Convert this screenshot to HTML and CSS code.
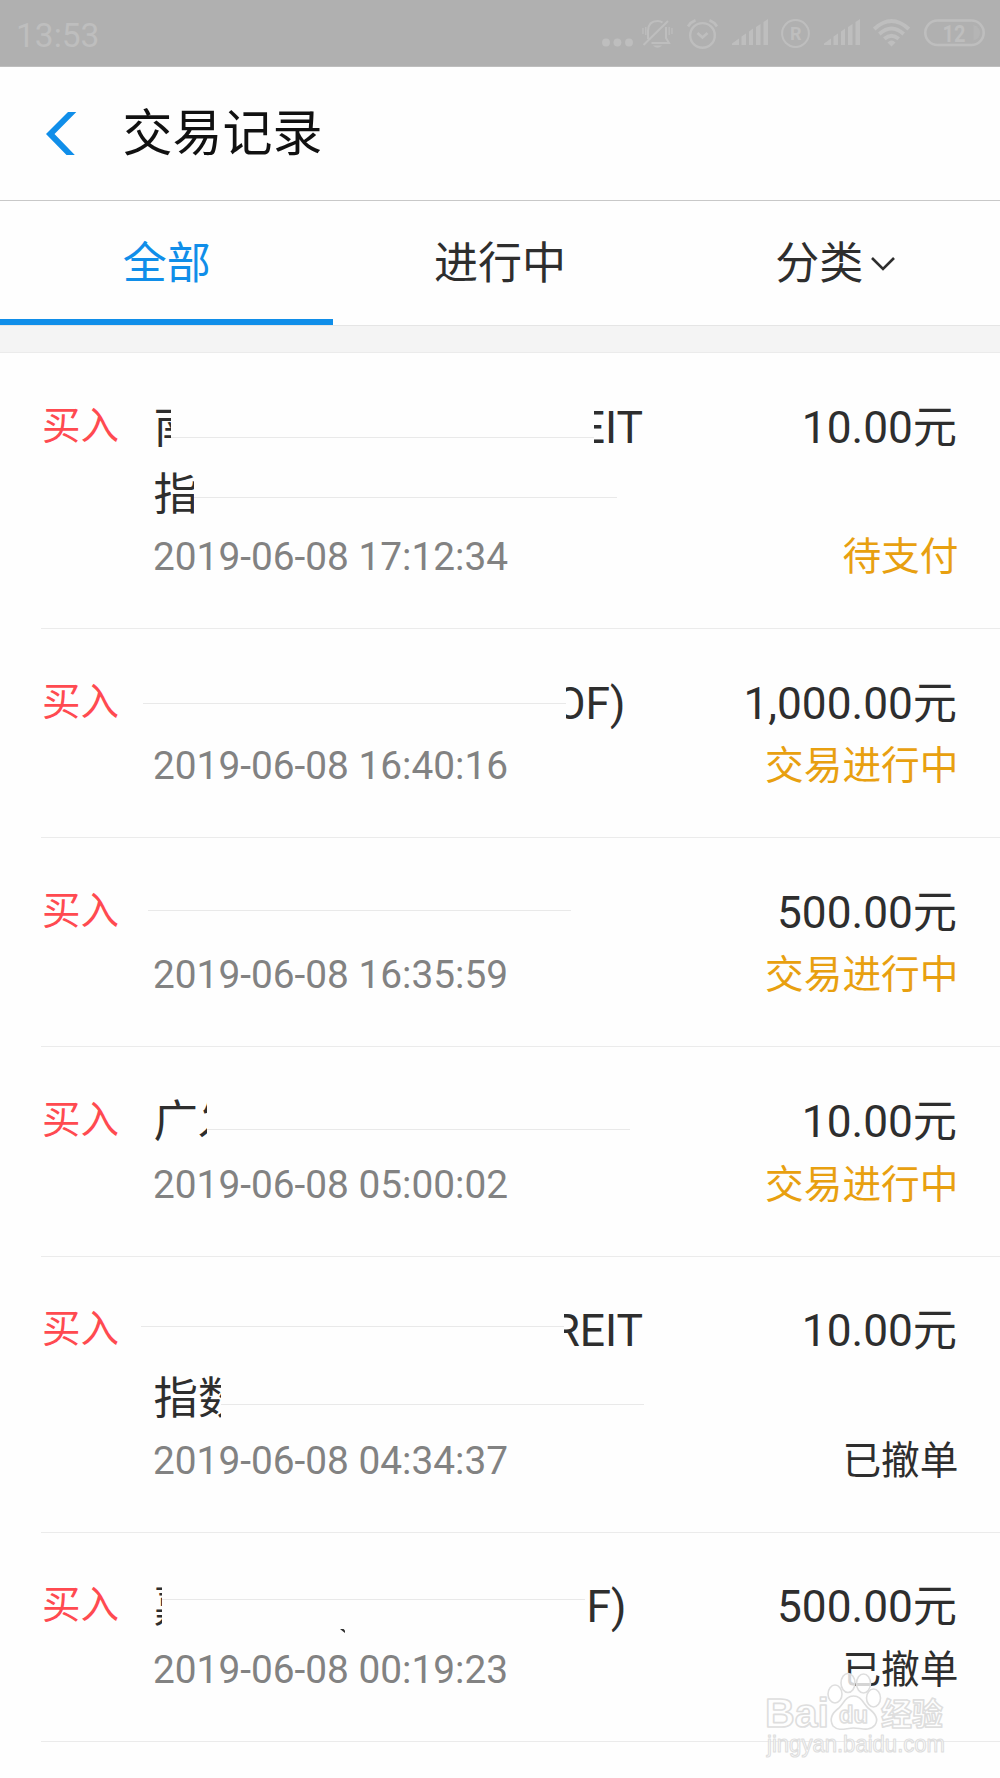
FILE: index.html
```html
<!DOCTYPE html>
<html lang="zh-CN">
<head>
  <meta charset="UTF-8">
  <title>交易记录</title>
  <link rel="stylesheet" href="styles.css">
</head>
<body>

  <!-- Status bar -->
  <div class="status-bar">
    <span class="clock">13:53</span>
    <div class="status-icons">
      <svg class="dots" width="31" height="30" viewBox="0 0 31 30" fill="currentColor">
        <circle cx="4" cy="23.5" r="3.9"/><circle cx="15.4" cy="23.5" r="3.9"/><circle cx="27" cy="23.5" r="3.9"/>
      </svg>
      <svg width="31" height="30" viewBox="0 0 31 30" fill="none" stroke="currentColor" stroke-width="2">
        <path d="M6 20V11.500Q6.500 2 15.500 2Q18.500 2 20.500 3.500M24 8V19L27 24H9.500M1.500 26L26 2"/>
        <path d="M1 9V15M3.800 8V16M27.200 8V16M30 9V15" stroke-width="1.300"/>
        <path d="M11 26.500H20Q15.500 31 11 26.500Z" fill="currentColor" stroke="none"/>
      </svg>
      <svg width="31" height="30" viewBox="0 0 31 30" fill="none" stroke="currentColor" stroke-width="2.400">
        <circle cx="15.500" cy="16.400" r="12.300"/>
        <path d="M10.500 14L15.500 18.500L20.500 14" stroke-width="2.600"/>
        <path d="M1 7.500Q4 3 8.500 1.300M22.500 1.300Q27 3 30 7.500" stroke-width="2.800"/>
      </svg>
      <svg width="36" height="30" viewBox="0 0 36 30" fill="currentColor">
        <path d="M0 26V24.500L7 19.500V26ZM9.500 26V17.500L14 14.500V26ZM17 26V12.500L21 9.500V26ZM24 26V8L28.500 5V26ZM31.500 26V3L36 0V26Z"/>
      </svg>
      <svg width="29" height="30" viewBox="0 0 29 30" fill="none" stroke="currentColor" stroke-width="2">
        <circle cx="14.500" cy="14.500" r="13.400"/>
        <text class="icon-text" x="14.700" y="21" font-size="18" text-anchor="middle">R</text>
      </svg>
      <svg width="36" height="30" viewBox="0 0 36 30" fill="currentColor">
        <path d="M0 26V24.500L7 19.500V26ZM9.500 26V17.500L14 14.500V26ZM17 26V12.500L21 9.500V26ZM24 26V8L28.500 5V26ZM31.500 26V3L36 0V26Z"/>
      </svg>
      <svg width="37" height="30" viewBox="0 0 37 30" fill="none" stroke="currentColor" stroke-width="3.800">
        <path d="M1.200 10Q18.500 -6 35.800 10M6.300 15Q18.500 4 30.700 15M11.300 19.800Q18.500 13.500 25.700 19.800"/>
        <path d="M14.500 23.500Q18.500 19.500 22.500 23.500L18.500 27.500Z" fill="currentColor" stroke="none"/>
      </svg>
      <svg width="61" height="30" viewBox="0 0 61 30" fill="none" stroke="currentColor" stroke-width="2.600">
        <rect x="1.300" y="1.500" width="58.400" height="24.500" rx="12.200"/>
        <path d="M49.500 6Q56 8 56 13.700Q56 19.500 49.500 21.500Z" fill="currentColor" stroke="none" opacity=".4"/>
        <text class="icon-text" x="30" y="22.500" font-size="24" text-anchor="middle" textLength="23" lengthAdjust="spacingAndGlyphs">12</text>
      </svg>
    </div>
  </div>

  <!-- Title -->
  <header class="header">
    <svg class="back" width="31" height="44" viewBox="0 0 31 44" fill="#108ee9">
      <path d="M22 0H30.300L8.500 22L28.800 43H20.500L0 22Z"/>
    </svg>
    <h1>交易记录</h1>
  </header>

  <!-- Tabs -->
  <nav class="tabs">
    <div class="tab active">全部</div>
    <div class="tab">进行中</div>
    <div class="tab sort">分类<svg class="arrow" width="24" height="14" viewBox="0 0 24 14" fill="none" stroke="#2e2e2e" stroke-width="2.600"><path d="M1 1L12 12L23 1"/></svg></div>
  </nav>
  <div class="spacer"></div>

  <!-- Records -->
  <ul class="records">
    <li class="record">
      <span class="type">买入</span>
      <div class="info">
        <div class="name r1a"><span class="head">南</span><i class="rule"></i><span class="tail">EIT</span></div>
        <div class="name r1b"><span class="head">指</span><i class="rule"></i></div>
        <div class="time">2019-06-08 17:12:34</div>
      </div>
      <div class="result">
        <div class="amount">10.00元</div>
        <div class="state pending">待支付</div>
      </div>
    </li>

    <li class="record">
      <span class="type">买入</span>
      <div class="info">
        <div class="name r2"><i class="rule"></i><span class="tail">OF)</span></div>
        <div class="time">2019-06-08 16:40:16</div>
      </div>
      <div class="result">
        <div class="amount">1,000.00元</div>
        <div class="state pending">交易进行中</div>
      </div>
    </li>

    <li class="record">
      <span class="type">买入</span>
      <div class="info">
        <div class="name r3"><i class="rule"></i></div>
        <div class="time">2019-06-08 16:35:59</div>
      </div>
      <div class="result">
        <div class="amount">500.00元</div>
        <div class="state pending">交易进行中</div>
      </div>
    </li>

    <li class="record">
      <span class="type">买入</span>
      <div class="info">
        <div class="name r4"><span class="head">广发</span><i class="rule"></i></div>
        <div class="time">2019-06-08 05:00:02</div>
      </div>
      <div class="result">
        <div class="amount">10.00元</div>
        <div class="state pending">交易进行中</div>
      </div>
    </li>

    <li class="record">
      <span class="type">买入</span>
      <div class="info">
        <div class="name r5a"><i class="rule"></i><span class="tail">REIT</span></div>
        <div class="name r5b"><span class="head">指数</span><i class="rule"></i></div>
        <div class="time">2019-06-08 04:34:37</div>
      </div>
      <div class="result">
        <div class="amount">10.00元</div>
        <div class="state">已撤单</div>
      </div>
    </li>

    <li class="record">
      <span class="type">买入</span>
      <div class="info">
        <div class="name r6"><span class="head">嘉</span><i class="rule"></i><span class="tail">F)</span>
          <svg class="speck" width="6" height="4" viewBox="0 0 6 4" fill="#2e2e2e"><path d="M0 0H3.500L5 1.500V4Z"/></svg>
        </div>
        <div class="time">2019-06-08 00:19:23</div>
      </div>
      <div class="result">
        <div class="amount">500.00元</div>
        <div class="state">已撤单</div>
      </div>
    </li>
  </ul>

  <!-- Watermark -->
  <svg class="watermark" width="190" height="92" viewBox="0 0 190 92">
    <g class="wm-shape">
      <ellipse cx="15" cy="23" rx="7" ry="9"/>
      <ellipse cx="28" cy="12" rx="7" ry="9.500"/>
      <ellipse cx="43.500" cy="12.500" rx="7" ry="9.500"/>
      <ellipse cx="53.500" cy="27" rx="7" ry="9"/>
      <path d="M33.500 25C41 25 43 32 48 37C55 42 59 48 55 54C49 61 41 57 33.500 57C26 57 19 61 13 55C9 48 12 42 19 37C24 32 26 25 33.500 25Z"/>
    </g>
    <text class="wm-text" x="-55" y="56" font-size="40" textLength="64" lengthAdjust="spacingAndGlyphs">Bai</text>
    <text class="wm-text" x="19" y="52" font-size="24" textLength="29" lengthAdjust="spacingAndGlyphs">du</text>
    <text class="wm-text wm-cn" x="61" y="54" font-size="31">经验</text>
    <text class="wm-text wm-url" x="-53" y="81" font-size="24" textLength="178" lengthAdjust="spacingAndGlyphs">jingyan.baidu.com</text>
  </svg>

</body>
</html>
```
FILE: styles.css
```css
* {
  box-sizing: border-box;
  margin: 0;
  padding: 0;
}

body {
  position: relative;
  height: 1778px;
  overflow: hidden;
  background: #fefefe;
  color: #2e2e2e;
  font-family: Roboto, "Noto Sans CJK SC", sans-serif;
}

/* Status bar */
.status-bar {
  display: flex;
  justify-content: space-between;
  height: 67px;
  padding: 0 15px 0 16px;
  background: #b0b0b0;
  border-bottom: 1px solid #bebebe;
  color: #bebebe;
}

.clock {
  font-size: 33.5px;
  line-height: 71px;
}

.status-icons {
  display: flex;
  gap: 13.6px;
  padding-top: 19px;
}

.status-icons .dots {
  margin-right: -4px;
}

.icon-text {
  fill: currentColor;
  stroke: none;
  font-weight: 700;
}

/* Header */
.header {
  display: flex;
  align-items: center;
  height: 134px;
  padding-left: 46px;
  border-bottom: 1px solid #c8c8c8;
}

.header h1 {
  margin-left: 45.5px;
  font-size: 50px;
  font-weight: 400;
  line-height: 66px;
  color: #111;
}

/* Tabs */
.tabs {
  display: grid;
  grid-template-columns: repeat(3, 1fr);
  height: 125px;
  border-bottom: 1px solid #e5e5e5;
}

.tab {
  display: flex;
  align-items: center;
  justify-content: center;
  font-size: 44px;
  border-bottom: 6px solid transparent;
}

.tab.active {
  color: #108ee9;
  border-bottom-color: #108ee9;
}

.tab.sort {
  padding-left: 4px;
}

.arrow {
  margin: 8px 0 0 8px;
}

.spacer {
  height: 27px;
  background: #f4f4f4;
  border-bottom: 1px solid #ebebeb;
}

/* Records */
.records {
  list-style: none;
  padding-left: 41px;
}

.record {
  display: flex;
  padding: 41.7px 43px 41.7px 0;
  border-bottom: 1px solid #ebebeb;
}

.type {
  width: 112px;
  padding-left: 1px;
  font-size: 38.5px;
  line-height: 61px;
  color: #ff4a50;
}

.info {
  flex: 1;
}

.name {
  position: relative;
  display: flex;
  width: 490px;
  height: 66.6px;
  margin-left: 0.5px;
  font-size: 44.4px;
  line-height: 66.6px;
  white-space: nowrap;
}

/* the visible start and end of a partly hidden fund name */
.head,
.tail {
  display: flex;
  overflow: hidden;
  flex: none;
}

.tail {
  justify-content: flex-end;
}

.rule {
  flex: none;
  width: 423px;
  height: 1px;
  background: #e9e9e9;
}

.r1a .head { width: 17.5px; }
.r1a .rule { margin-top: 42px; }
.r1a .tail { width: 49px; }
.r1b .head { width: 40.5px; padding-top: 1px; }
.r1b .rule { margin-top: 36px; }
.r2 .rule { margin: 32px 0 0 -10.5px; }
.r2 .tail { width: 59.5px; }
.r3 .rule { margin: 30px 0 0 -6px; }
.r4 .head { width: 53px; }
.r4 .rule { margin-top: 40px; }
.r5a .rule { margin: 28px 0 0 -12.5px; }
.r5a .tail { width: 79px; }
.r5b .head { width: 67.5px; padding-top: 1px; }
.r5b .rule { margin-top: 39px; }
.r6 .head { width: 8px; }
.r6 .rule { margin-top: 25px; }
.r6 .tail { width: 42px; }

.speck {
  position: absolute;
  left: 186px;
  top: 55px;
}

.time {
  font-size: 38.8px;
  line-height: 58.3px;
  color: #828282;
}

.result {
  display: flex;
  flex-direction: column;
  justify-content: space-between;
  text-align: right;
}

.amount {
  font-size: 44.2px;
  line-height: 66.6px;
}

.state {
  margin-right: -1.5px;
  font-size: 38.7px;
  line-height: 58.3px;
}

.pending {
  color: #e8a010;
}

/* Watermark */
.watermark {
  position: absolute;
  left: 820px;
  top: 1671px;
  overflow: visible;
}

.wm-shape,
.wm-text {
  fill: rgba(255, 255, 255, 0.8);
  stroke: #dedede;
  stroke-width: 1.6px;
  stroke-linejoin: round;
}

.wm-text {
  font-family: "Liberation Sans", "Noto Sans CJK SC", sans-serif;
  font-weight: 700;
}

.wm-url {
  font-weight: 400;
  stroke-width: 1.2px;
}
```
